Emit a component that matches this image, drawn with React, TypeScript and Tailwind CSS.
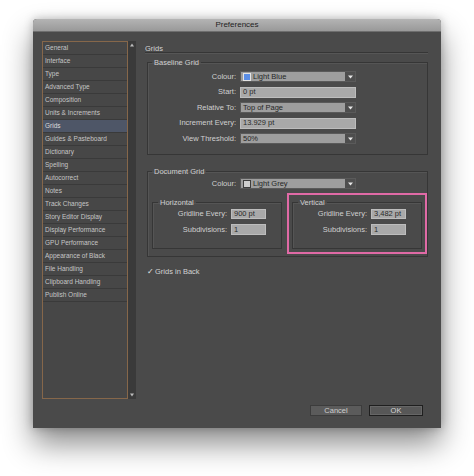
import React from 'react';

const PANELS = [
  'General',
  'Interface',
  'Type',
  'Advanced Type',
  'Composition',
  'Units & Increments',
  'Grids',
  'Guides & Pasteboard',
  'Dictionary',
  'Spelling',
  'Autocorrect',
  'Notes',
  'Track Changes',
  'Story Editor Display',
  'Display Performance',
  'GPU Performance',
  'Appearance of Black',
  'File Handling',
  'Clipboard Handling',
  'Publish Online',
];

const FONT = { fontFamily: '"Liberation Sans", Arial, sans-serif' };

function Arrow() {
  return (
    <div className="w-[10px] h-full bg-[#4e4e4e] flex items-center justify-center">
      <svg width="5" height="4" viewBox="0 0 5 4">
        <path d="M0 0.5 L5 0.5 L2.5 3.5 Z" fill="#e8e8e8" />
      </svg>
    </div>
  );
}

function Swatch({ fill, edge }: { fill: string; edge: string }) {
  return (
    <span
      className="inline-block w-[8px] h-[8px] mr-[2px] border"
      style={{ background: fill, borderColor: edge }}
    />
  );
}

function Dropdown({ children }: { children: React.ReactNode }) {
  return (
    <div className="w-[116px] h-[11px] flex bg-[#9e9e9e] border border-[#5a5a5a]">
      <div className="flex-1 flex items-center pl-[2px] text-[#262626] leading-none">{children}</div>
      <Arrow />
    </div>
  );
}

function TextBox({ value, width }: { value: string; width: string }) {
  return (
    <div className={`${width} h-full flex items-center pl-[2px] bg-[#a9a9a9] border border-[#bdbdbd] text-[#2a2a2a] leading-none`}>
      {value}
    </div>
  );
}

function Row({ label, children, labelW, h = 'h-[11px]' }: { label: string; children: React.ReactNode; labelW: string; h?: string }) {
  return (
    <div className={`flex items-center gap-[4px] ${h}`}>
      <div className={`${labelW} text-right text-[#d0d0d0] leading-none`}>{label}</div>
      {children}
    </div>
  );
}

function SubGroup({ title, every }: { title: string; every: string }) {
  return (
    <fieldset className="w-[130px] border border-[#363636] shadow-[inset_1px_1px_0_#555] px-0 pt-[2px] pb-[13px] flex flex-col gap-[5px]">
      <legend className="ml-[5px] px-[2px] leading-[9px] text-[#d0d0d0]">{title}</legend>
      <Row label="Gridline Every:" labelW="w-[74px]" h="h-[10px]">
        <TextBox value={every} width="w-[35px]" />
      </Row>
      <Row label="Subdivisions:" labelW="w-[74px]" h="h-[11px]">
        <TextBox value="1" width="w-[35px]" />
      </Row>
    </fieldset>
  );
}

export default function App() {
  return (
    <div className="w-[474px] h-[476px] bg-white pt-[19px] pl-[33px]" style={FONT}>
      <div className="w-[408px] h-[409px] bg-[#4a4a4a] rounded-t-[4px] shadow-[0_16px_30px_rgba(0,0,0,0.45),0_0_10px_rgba(0,0,0,0.25)] flex flex-col text-[7.5px]">
        {/* title bar */}
        <div className="h-[13px] rounded-t-[4px] bg-gradient-to-b from-[#b4b4b4] to-[#999999] border-b border-[#6e6e6e] flex items-center justify-center text-[8px] text-[#1e1e1e] leading-none">
          Preferences
        </div>

        <div className="flex pl-[9px] pt-[9px]">
          {/* panel list */}
          <div className="flex h-[358px]">
            <div className="w-[86px] h-full border border-[#86674a] bg-[#474747] flex flex-col">
              {PANELS.map((p) => (
                <div
                  key={p}
                  className={`h-[13px] shrink-0 flex items-center pl-[2px] border-b border-[#3a3a3a] text-[6.5px] leading-none ${
                    p === 'Grids' ? 'bg-[#4e5667] text-[#dcdcdc]' : 'text-[#c6c6c6]'
                  }`}
                >
                  {p}
                </div>
              ))}
            </div>
            <div className="w-[8px] h-full bg-[#3a3a3a] flex flex-col items-center justify-between py-[2px]">
              <svg width="4" height="4" viewBox="0 0 4 4">
                <path d="M0 3.5 L4 3.5 L2 0.5 Z" fill="#bcbcbc" />
              </svg>
              <svg width="4" height="4" viewBox="0 0 4 4">
                <path d="M0 0.5 L4 0.5 L2 3.5 Z" fill="#bcbcbc" />
              </svg>
            </div>
          </div>

          {/* grids panel */}
          <div className="ml-[9px] w-[283px] flex flex-col">
            <div className="h-[12px] pt-[3px] border-b border-[#363636] shadow-[0_1px_0_#565656] text-[#d2d2d2] leading-[9px]">
              Grids
            </div>

            <fieldset className="mt-[5px] ml-[2px] w-[281px] border border-[#363636] shadow-[inset_1px_1px_0_#555] pt-[4px] pb-[10px] flex flex-col gap-[4.5px]">
              <legend className="ml-[4px] px-[2px] leading-[9px] text-[#d0d0d0]">Baseline Grid</legend>
              <Row label="Colour:" labelW="w-[88px]">
                <Dropdown>
                  <Swatch fill="#5b8ee6" edge="#e4e4e4" />
                  Light Blue
                </Dropdown>
              </Row>
              <Row label="Start:" labelW="w-[88px]">
                <TextBox value="0 pt" width="w-[116px]" />
              </Row>
              <Row label="Relative To:" labelW="w-[88px]">
                <Dropdown>Top of Page</Dropdown>
              </Row>
              <Row label="Increment Every:" labelW="w-[88px]">
                <TextBox value="13.929 pt" width="w-[116px]" />
              </Row>
              <Row label="View Threshold:" labelW="w-[88px]">
                <Dropdown>50%</Dropdown>
              </Row>
            </fieldset>

            <fieldset className="mt-[12px] ml-[2px] w-[281px] border border-[#363636] shadow-[inset_1px_1px_0_#555] pt-[2px] pb-[7px] flex flex-col">
              <legend className="ml-[4px] px-[2px] leading-[9px] text-[#d0d0d0]">Document Grid</legend>
              <Row label="Colour:" labelW="w-[88px]">
                <Dropdown>
                  <Swatch fill="#cfcfcf" edge="#3e3e3e" />
                  Light Grey
                </Dropdown>
              </Row>
              <div className="mt-[9px] ml-[4px] flex gap-[10px]">
                <SubGroup title="Horizontal" every="900 pt" />
                <div className="relative">
                  <SubGroup title="Vertical" every="3,482 pt" />
                  <div className="absolute -inset-[5px] border-2 border-[#e06aa6] pointer-events-none" />
                </div>
              </div>
            </fieldset>

            <div className="mt-[10px] ml-[2px] flex items-center h-[9px] text-[#d2d2d2] leading-none">
              <span className="text-[8px] mr-[1px] text-[#e6e6e6]">✓</span>
              Grids in Back
            </div>
          </div>
        </div>

        {/* buttons */}
        <div className="mt-[6px] pr-[18px] flex justify-end gap-[7px]">
          <div className="w-[52px] h-[11px] bg-[#5b5b5b] border border-[#3c3c3c] flex items-center justify-center text-[#cfcfcf] leading-none">
            Cancel
          </div>
          <div className="w-[54px] h-[11px] bg-[#575757] border border-[#1f1f1f] shadow-[inset_0_0_0_1px_#666] flex items-center justify-center text-[#d6d6d6] leading-none">
            OK
          </div>
        </div>
      </div>
    </div>
  );
}
